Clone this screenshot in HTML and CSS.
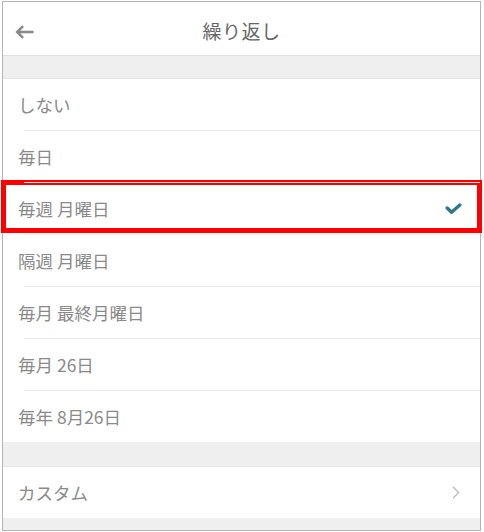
FILE: index.html
```html
<!DOCTYPE html>
<html lang="ja">
<head>
<meta charset="utf-8">
<title>繰り返し</title>
<link rel="stylesheet" href="styles.css">
</head>
<body>
<div class="screen">
  <header class="topbar">
    <button class="back" aria-label="戻る">
      <svg width="19" height="14" viewBox="0 0 19 14" fill="none" stroke="#8a8a8a" stroke-width="2.6" stroke-linecap="butt" stroke-linejoin="miter">
        <path d="M18.5 7H2.5"/>
        <path d="M8 1.2L2.2 7L8 12.8"/>
      </svg>
    </button>
    <h1 class="title">繰り返し</h1>
  </header>

  <div class="gap gap-top"></div>

  <ul class="options">
    <li class="option">しない</li>
    <li class="option">毎日</li>
    <li class="option is-selected">
      <span>毎週 月曜日</span>
      <svg class="check" width="17" height="12" viewBox="0 0 17 12" fill="none" stroke="#2b7a8b" stroke-width="3.4" stroke-linecap="round" stroke-linejoin="round">
        <path d="M2.2 5L6.6 9.2L14.8 2"/>
      </svg>
      <span class="highlight"></span>
    </li>
    <li class="option">隔週 月曜日</li>
    <li class="option">毎月 最終月曜日</li>
    <li class="option">毎月 26日</li>
    <li class="option">毎年 8月26日</li>
  </ul>

  <div class="gap gap-mid"></div>

  <div class="option custom">
    <span>カスタム</span>
    <svg class="chevron" width="8" height="13" viewBox="0 0 8 13" fill="none" stroke="#bdbdbd" stroke-width="1.3">
      <path d="M1 0.8L6.6 6.5L1 12.2"/>
    </svg>
  </div>

  <div class="gap gap-bottom"></div>
</div>
</body>
</html>
```

FILE: styles.css
```css
* {
  box-sizing: border-box;
}

html, body {
  margin: 0;
  padding: 0;
  background: #ffffff;
}

body {
  font-family: "Noto Sans CJK JP", "Noto Sans", sans-serif;
  color: #8a8a8a;
}

.screen {
  margin: 1px 0 0 2px;
  width: 479px;
  height: 530px;
  border: 1px solid #b4b4b4;
  background: #ffffff;
  display: flex;
  flex-direction: column;
}

.topbar {
  position: relative;
  height: 54px;
  flex: none;
  border-bottom: 1px solid #e0e0e0;
  display: flex;
  align-items: center;
  justify-content: center;
  padding-top: 4px;
}

.back {
  position: absolute;
  left: 12px;
  top: 23px;
  padding: 0;
  border: 0;
  background: none;
  display: flex;
}

.title {
  margin: 0;
  font-size: 19px;
  font-weight: 400;
  color: #666666;
  letter-spacing: 0.5px;
}

.gap {
  flex: none;
  background: #efefef;
}

.gap-top {
  height: 23px;
  border-bottom: 1px solid #e6e6e6;
}

.gap-mid {
  height: 25px;
  border-bottom: 1px solid #e6e6e6;
}

.gap-bottom {
  flex: 1;
}

.options {
  list-style: none;
  margin: 0;
  padding: 0;
  flex: none;
}

.option {
  position: relative;
  height: 51px;
  display: flex;
  align-items: center;
  justify-content: space-between;
  padding: 0 17px 0 15px;
  font-size: 17.5px;
  color: #8a8a8a;
}

.options .option + .option {
  height: 52px;
  padding-top: 1px;
}

/* dividers are inset from the left edge */
.options .option + .option::after {
  content: "";
  position: absolute;
  top: 0;
  left: 21px;
  right: 0;
  height: 1px;
  background: #ececec;
}

.custom {
  flex: none;
  height: 51px;
}

.check {
  margin-right: 1px;
  margin-top: 1px;
}

.chevron {
  margin-right: 3px;
}

.highlight {
  position: absolute;
  left: -2px;
  right: -2px;
  top: -2px;
  bottom: 1px;
  border: 5px solid #ff0000;
  pointer-events: none;
}
```
